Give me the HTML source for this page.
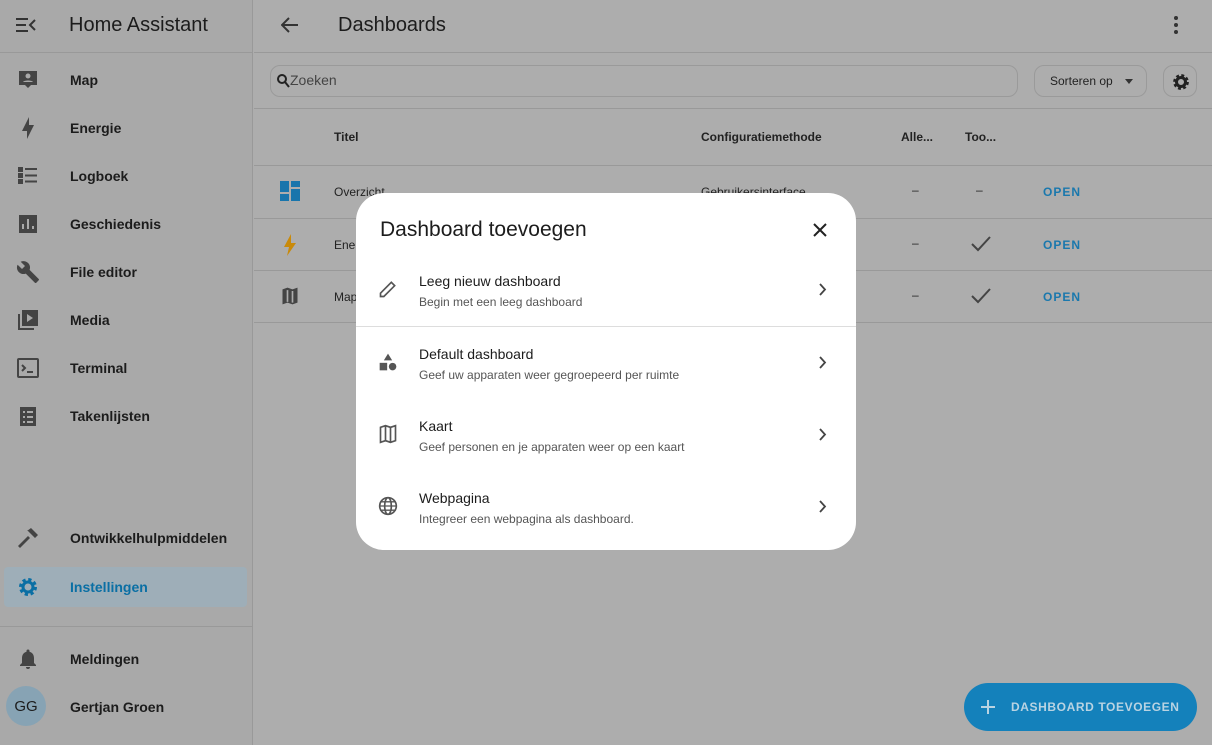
<!DOCTYPE html><html><head><meta charset="utf-8"><style>
*{box-sizing:border-box;margin:0;padding:0}
body{width:1212px;height:745px;overflow:hidden;font-family:"Liberation Sans",sans-serif;background:#adadad;position:relative;color:#141414}
.sb{position:absolute;left:0;top:0;width:253px;height:745px;background:#a9a9a9;border-right:1px solid #999}
.sbh{height:53px;border-bottom:1px solid #999;display:flex;align-items:center}
.sbh .t{position:absolute;left:69px;top:14px;font-size:20px;color:#1c1c1c}
.it{position:absolute;left:4px;width:243px;height:40px;display:flex;align-items:center;font-size:14px;font-weight:bold;color:#1c1c1c}
.it .ic{position:absolute;left:12px;top:8px;width:24px;height:24px}
.it span{position:absolute;left:66px}
.sel{background:#9eaeb8;border-radius:4px;color:#0a6fa4}
.hd{position:absolute;left:254px;top:0;right:0;height:53px;border-bottom:1px solid #999}
.hd .t{position:absolute;left:84px;top:14px;font-size:20px;color:#1c1c1c}
.search{position:absolute;left:270px;top:65px;width:748px;height:32px;border:1px solid #9a9a9a;border-radius:10px;font-size:14px;color:#444;padding:6px 0 0 19px}
.sort{position:absolute;left:1034px;top:65px;width:113px;height:32px;border:1px solid #9a9a9a;border-radius:10px;font-size:12px;padding:8px 0 0 15px;color:#222}
.gear{position:absolute;left:1163px;top:65px;width:34px;height:32px;border:1px solid #9a9a9a;border-radius:10px}
.line{position:absolute;left:254px;right:0;height:1px;background:#999}
.th{position:absolute;top:130px;font-size:12px;font-weight:bold;color:#222}
.td{position:absolute;font-size:12px;color:#222}
.open{position:absolute;left:1043px;font-size:12px;font-weight:bold;color:#1a78ad;letter-spacing:1px}
.dlg{position:absolute;left:356px;top:193px;width:500px;height:357px;background:#fff;border-radius:28px}
.dlg h2{position:absolute;left:24px;top:25px;font-size:21px;font-weight:normal;color:#1c1c1c}
.row{position:absolute;left:0;width:500px;height:72px}
.row .a{position:absolute;left:63px;top:20px;font-size:14px;color:#1c1c1c}
.row .b{position:absolute;left:63px;top:42px;font-size:12px;color:#555}
.row svg{position:absolute}
.fab{position:absolute;left:964px;top:683px;width:233px;height:48px;border-radius:24px;background:#1481bb;color:#b9d3e2;font-size:12px;font-weight:bold;letter-spacing:.6px;padding:17px 0 0 47px}
</style></head><body>
<div class="sb">
<div class="sbh"><svg style="position:absolute;left:16px;top:17px" width="20" height="16" viewBox="0 0 20 16"><path d="M0 2h12M0 8h10M0 14h12M19 3l-5 5 5 5" stroke="#333" stroke-width="2" fill="none"/></svg><div class="t">Home Assistant</div></div>
<div class="it" style="top:60px"><svg class="ic" viewBox="0 0 24 24"><path d="M3 3h18v14h-6l-3 3-3-3H3z" fill="#444"/><circle cx="12" cy="8" r="2.5" fill="#a9a9a9"/><path d="M7 14c1-2 9-2 10 0z" fill="#a9a9a9"/></svg><span>Map</span></div>
<div class="it" style="top:108px"><svg class="ic" viewBox="0 0 24 24"><path d="M11 15H6l7-14v8h5l-7 14z" fill="#444"/></svg><span>Energie</span></div>
<div class="it" style="top:156px"><svg class="ic" viewBox="0 0 24 24"><path d="M3 4h3v3H3zM3 10h3v3H3zM3 16h3v3H3zM9 5h12M9 11.5h12M9 17.5h12" stroke="#444" stroke-width="2" fill="#444"/></svg><span>Logboek</span></div>
<div class="it" style="top:204px"><svg class="ic" viewBox="0 0 24 24"><path d="M3 3h18v18H3z" fill="#444"/><path d="M7 17v-5M12 17V7M17 17v-3" stroke="#a9a9a9" stroke-width="2"/></svg><span>Geschiedenis</span></div>
<div class="it" style="top:252px"><svg class="ic" viewBox="0 0 24 24"><path d="M22.7 19l-9.1-9.1c.9-2.3.4-5-1.5-6.9-2-2-5-2.4-7.4-1.3L9 6 6 9 1.6 4.7C.4 7.1.9 10.1 2.9 12.1c1.9 1.900 4.6 2.4 6.9 1.5l9.1 9.1c.4.4 1 .4 1.4 0l2.3-2.3c.5-.4.5-1.1.1-1.4z" fill="#444"/></svg><span>File editor</span></div>
<div class="it" style="top:300px"><svg class="ic" viewBox="0 0 24 24"><path d="M2 6v16h16v-2H4V6z" fill="#444"/><path d="M6 2h16v16H6z" fill="#444"/><path d="M11 6v8l6-4z" fill="#a9a9a9"/></svg><span>Media</span></div>
<div class="it" style="top:348px"><svg class="ic" viewBox="0 0 24 24"><rect x="2" y="3" width="20" height="18" rx="1" fill="none" stroke="#444" stroke-width="2"/><path d="M6 9l3 3-3 3M11 16h6" stroke="#444" stroke-width="2" fill="none"/></svg><span>Terminal</span></div>
<div class="it" style="top:396px"><svg class="ic" viewBox="0 0 24 24"><path d="M4 3h16v19H4z" fill="#444"/><path d="M7 8h2M11 8h6M7 13h2M11 13h6M7 18h2M11 18h6" stroke="#a9a9a9" stroke-width="2"/></svg><span>Takenlijsten</span></div>
<div class="it" style="top:518px"><svg class="ic" viewBox="0 0 24 24"><path d="M2 20l10-10 2 2-10 10zM11 5l4-3 7 7-3 3-7-7z" fill="#444"/></svg><span>Ontwikkelhulpmiddelen</span></div>
<div class="it sel" style="top:567px"><svg class="ic" viewBox="0 0 24 24"><circle cx="12" cy="12" r="7" fill="none" stroke="#0a6fa4" stroke-width="4" stroke-dasharray="3 2.5"/><circle cx="12" cy="12" r="5" fill="none" stroke="#0a6fa4" stroke-width="3"/></svg><span>Instellingen</span></div>
<div style="position:absolute;left:0;top:626px;width:253px;height:1px;background:#999"></div>
<div class="it" style="top:639px"><svg class="ic" viewBox="0 0 24 24"><path d="M12 22a2 2 0 002-2h-4a2 2 0 002 2zM18 16v-5c0-3-1.6-5.6-4.5-6.3V4a1.5 1.5 0 00-3 0v.7C7.6 5.4 6 8 6 11v5l-2 2v1h16v-1z" fill="#444"/></svg><span>Meldingen</span></div>
<div class="it" style="top:687px"><div style="position:absolute;left:2px;top:-1px;width:40px;height:40px;border-radius:50%;background:#87a3b4;font-weight:normal;font-size:15px;padding-top:12px;text-align:center">GG</div><span>Gertjan Groen</span></div>
</div>
<div class="hd"><svg style="position:absolute;left:27px;top:17px" width="18" height="16" viewBox="0 0 18 16"><path d="M17 8H2M8 1L1 8l7 7" stroke="#333" stroke-width="2" fill="none"/></svg><div class="t">Dashboards</div>
<svg style="position:absolute;left:920px;top:16px" width="4" height="18"><circle cx="2" cy="2" r="2" fill="#333"/><circle cx="2" cy="9" r="2" fill="#333"/><circle cx="2" cy="16" r="2" fill="#333"/></svg></div>
<div class="search"><svg style="position:absolute;left:6px;top:8px" width="13" height="14" viewBox="0 0 13 14"><circle cx="5" cy="5" r="4" stroke="#222" stroke-width="2" fill="none"/><path d="M8 8l4 5" stroke="#222" stroke-width="2"/></svg>Zoeken</div>
<div class="sort">Sorteren op <span style="position:absolute;left:90px;top:13px;border:4px solid transparent;border-top:5px solid #333"></span></div>
<div class="gear"><svg style="position:absolute;left:8px;top:7px" width="18" height="18" viewBox="0 0 24 24"><circle cx="12" cy="12" r="8" fill="none" stroke="#222" stroke-width="5" stroke-dasharray="3.5 2.8"/><circle cx="12" cy="12" r="6" fill="none" stroke="#222" stroke-width="4"/></svg></div>
<div class="line" style="top:108px"></div>
<div class="th" style="left:334px">Titel</div><div class="th" style="left:701px">Configuratiemethode</div><div class="th" style="left:901px">Alle...</div><div class="th" style="left:965px">Too...</div>
<div class="line" style="top:165px"></div><div class="line" style="top:218px"></div><div class="line" style="top:270px"></div><div class="line" style="top:322px"></div>
<svg style="position:absolute;left:280px;top:181px" width="20" height="20"><path d="M0 0h9v11H0zM11 0h9v6h-9zM11 8h9v12h-9zM0 13h9v7H0z" fill="#1875ac"/></svg>
<div class="td" style="left:334px;top:185px">Overzicht</div><div class="td" style="left:701px;top:185px">Gebruikersinterface</div>
<div class="td" style="left:912px;top:183px">–</div><div class="td" style="left:976px;top:183px">–</div><div class="open" style="top:185px">OPEN</div>
<svg style="position:absolute;left:283px;top:234px" width="14" height="22" viewBox="0 0 14 22"><path d="M8 0L1 13h5l-2 9 9-13H8z" fill="#c98a0a"/></svg>
<div class="td" style="left:334px;top:238px">Ene</div><div class="td" style="left:912px;top:236px">–</div><div class="open" style="top:238px">OPEN</div>
<svg style="position:absolute;left:971px;top:236px" width="20" height="16"><path d="M1 8l6 6L19 1" stroke="#444" stroke-width="2" fill="none"/></svg>
<svg style="position:absolute;left:280px;top:286px" width="20" height="20" viewBox="0 0 24 24"><path d="M3 4l6-2 6 2 6-2v18l-6 2-6-2-6 2z" fill="#444"/><path d="M9 5v14M15 6v14" stroke="#adadad" stroke-width="2"/></svg>
<div class="td" style="left:334px;top:290px">Map</div><div class="td" style="left:912px;top:288px">–</div><div class="open" style="top:290px">OPEN</div>
<svg style="position:absolute;left:971px;top:288px" width="20" height="16"><path d="M1 8l6 6L19 1" stroke="#444" stroke-width="2" fill="none"/></svg>
<div class="fab"><svg style="position:absolute;left:17px;top:17px" width="14" height="14"><path d="M7 0v14M0 7h14" stroke="#b9d3e2" stroke-width="2"/></svg>DASHBOARD TOEVOEGEN</div>
<div class="dlg"><h2>Dashboard toevoegen</h2>
<svg style="position:absolute;left:457px;top:30px" width="14" height="14"><path d="M1 1l12 12M13 1L1 13" stroke="#222" stroke-width="2"/></svg>
<div class="row" style="top:60px"><svg style="left:22px;top:26px" width="20" height="20" viewBox="0 0 24 24"><path d="M3 21v-4L16 4l4 4L7 21z" fill="none" stroke="#555" stroke-width="2"/></svg><div class="a">Leeg nieuw dashboard</div><div class="b">Begin met een leeg dashboard</div><svg style="left:463px;top:30px" width="8" height="13"><path d="M1 1l5 5.5L1 12" stroke="#444" stroke-width="1.8" fill="none"/></svg></div>
<div style="position:absolute;left:0;top:133px;width:500px;height:1px;background:#ddd"></div>
<div class="row" style="top:133px"><svg style="left:22px;top:26px" width="20" height="20" viewBox="0 0 24 24"><path d="M12 2l5 8H7z" fill="#555"/><rect x="2" y="13" width="9" height="9" fill="#555"/><circle cx="17.5" cy="17.5" r="4.5" fill="#555"/></svg><div class="a">Default dashboard</div><div class="b">Geef uw apparaten weer gegroepeerd per ruimte</div><svg style="left:463px;top:30px" width="8" height="13"><path d="M1 1l5 5.5L1 12" stroke="#444" stroke-width="1.8" fill="none"/></svg></div>
<div class="row" style="top:205px"><svg style="left:22px;top:26px" width="20" height="20" viewBox="0 0 24 24"><path d="M3 4l6-2 6 2 6-2v18l-6 2-6-2-6 2z" fill="none" stroke="#555" stroke-width="2"/><path d="M9 2v18M15 4v18" stroke="#555" stroke-width="2"/></svg><div class="a">Kaart</div><div class="b">Geef personen en je apparaten weer op een kaart</div><svg style="left:463px;top:30px" width="8" height="13"><path d="M1 1l5 5.5L1 12" stroke="#444" stroke-width="1.8" fill="none"/></svg></div>
<div class="row" style="top:277px"><svg style="left:22px;top:26px" width="20" height="20" viewBox="0 0 24 24"><circle cx="12" cy="12" r="10" fill="none" stroke="#555" stroke-width="2"/><ellipse cx="12" cy="12" rx="4" ry="10" fill="none" stroke="#555" stroke-width="2"/><path d="M2 12h20M4 7h16M4 17h16" stroke="#555" stroke-width="1.6"/></svg><div class="a">Webpagina</div><div class="b">Integreer een webpagina als dashboard.</div><svg style="left:463px;top:30px" width="8" height="13"><path d="M1 1l5 5.5L1 12" stroke="#444" stroke-width="1.8" fill="none"/></svg></div>
</div>
</body></html>
